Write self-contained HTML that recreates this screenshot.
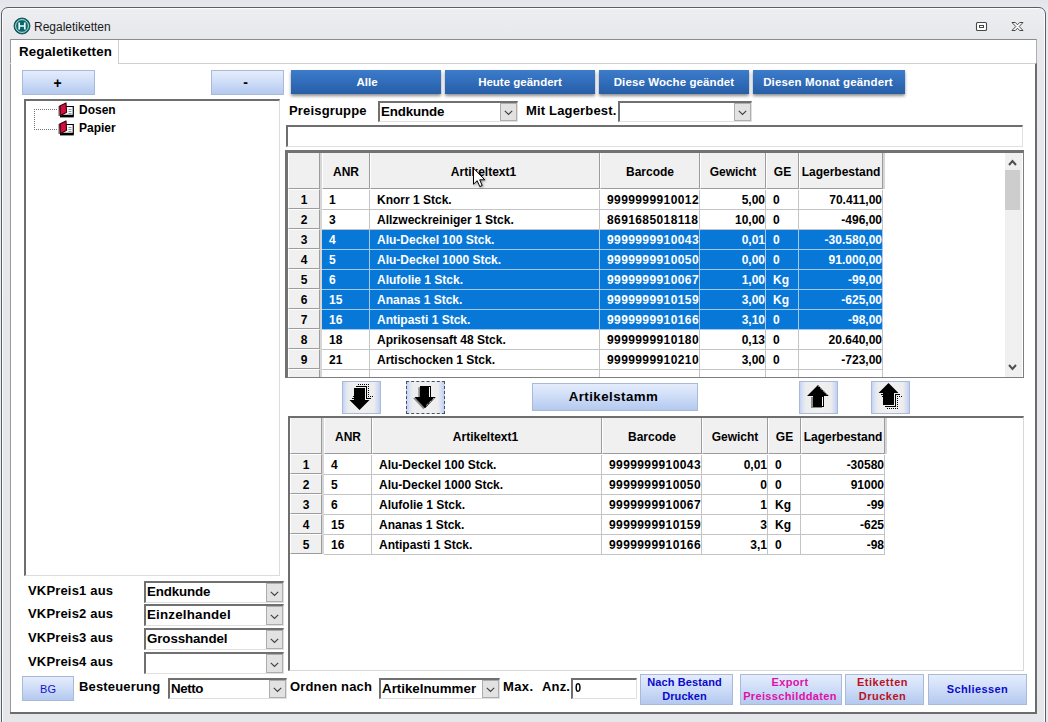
<!DOCTYPE html>
<html lang="de">
<head>
<meta charset="utf-8">
<title>Regaletiketten</title>
<style>
*{box-sizing:border-box;margin:0;padding:0}
html,body{width:1048px;height:722px;overflow:hidden}
body{background:linear-gradient(#e2e5eb,#e8eaef 12px,#e8eaef);font-family:"Liberation Sans",Arial,sans-serif;font-size:12px;color:#000;position:relative}
.abs{position:absolute}
#win{position:absolute;left:1px;top:7px;width:1045px;height:740px;border:1px solid #5a5e65;border-radius:7px;background:linear-gradient(#eceef1,#e6e8ec 30px,#e4e6ea);box-shadow:inset 0 0 0 1px rgba(255,255,255,.85)}
#ttl{position:absolute;left:34px;top:20px;font-size:12px;line-height:14px;color:#1c1c1c;letter-spacing:0}
#client{position:absolute;left:10px;top:39px;width:1027px;height:675px;background:#fff;border-left:1px solid #9a9a9a;border-top:1px solid #8c8c8c;border-right:1px solid #b0b0b0}
#panelb{position:absolute;left:10px;top:63px;width:1027px;height:651px;border-right:2px solid #6c6c6c;border-bottom:2px solid #6c6c6c;border-top:1px solid #d0d0d0}
#tab{position:absolute;left:11px;top:40px;width:108px;height:24px;background:#fff;border-right:1px solid #d0d0d0;font-weight:bold;font-size:13.3px;line-height:16px;padding:4px 0 0 8px;letter-spacing:.15px}
.lb{position:absolute;background:linear-gradient(#e5edfc,#cddcf7 50%,#b4c9ef);border:1px solid #a9b9d8;text-align:center;font-weight:bold}
.bb{position:absolute;top:70px;height:24px;background:linear-gradient(#3d7ccb,#2f6bb9 55%,#285ea6);color:#fff;font-weight:bold;font-size:11.5px;line-height:24px;text-align:center;box-shadow:0 2px 3px rgba(0,0,0,.45)}
.lab{position:absolute;font-weight:bold;font-size:13px;line-height:16px;white-space:pre;letter-spacing:.17px}
#tree{position:absolute;left:24px;top:99px;width:256px;height:477px;background:#fff;border-top:2px solid #6e6e6e;border-left:2px solid #6e6e6e;border-right:1px solid #dcdcdc;border-bottom:1px solid #dcdcdc}
.ti{position:absolute;left:79px;font-weight:bold;font-size:12px;line-height:14px}
.edit{position:absolute;background:#fff;border-top:2px solid #6e6e6e;border-left:2px solid #6e6e6e;border-right:1px solid #e0e0e0;border-bottom:1px solid #e0e0e0}
.combo{position:absolute;background:#fff;border-top:2px solid #707070;border-left:2px solid #707070;border-right:1px solid #e0e0e0;border-bottom:1px solid #e0e0e0}
.combo span{position:absolute;left:1px;top:1px;font-weight:bold;font-size:13.33px;line-height:16px;white-space:nowrap}
.combo i{position:absolute;right:0;top:0;bottom:0;width:17px;background:#e2e2e2;border:1px solid #adadad}
.combo i svg{position:absolute;left:3px;top:50%;margin-top:-2px}
.grid{position:absolute;background:#fff;border-top:2px solid #6e6e6e;border-left:2px solid #6e6e6e;border-right:1px solid #d8d8d8;border-bottom:1px solid #d8d8d8;overflow:hidden}
.ginner{position:absolute;left:0;top:0;right:0;bottom:0}
.hc{position:absolute;top:0;height:37px;background:#f0f0f0;border-right:1px solid #9c9c9c;border-bottom:1px solid #9c9c9c;border-top:1px solid #fff;border-left:1px solid #fff;font-weight:bold;font-size:12px;line-height:38px;text-align:center;white-space:nowrap;box-shadow:2px 0 0 #d6d6d6}
.row{position:absolute;left:0;height:20px;width:100%}
.rh{position:absolute;top:-1px;height:20px;background:#f0f0f0;border-right:1px solid #9c9c9c;border-bottom:1px solid #9c9c9c;border-top:1px solid #fff;border-left:1px solid #fff;font-weight:bold;font-size:12px;line-height:21px;text-align:center;box-shadow:2px 0 0 #d6d6d6}
.c{position:absolute;top:0;height:20px;border-right:1px solid #c4c4c4;border-bottom:1px solid #c4c4c4;font-weight:bold;font-size:12px;line-height:20px;white-space:nowrap;overflow:hidden}
.c.bc{letter-spacing:.4px}
.c.ge{padding-left:8px}
.c.l{padding-left:7px}
.c.r{text-align:right;padding-right:0}
.sel .c{background:#0878d8;color:#fff;border-color:#a4caf0}
.sb{position:absolute;right:1px;top:0;bottom:0;width:17px;background:#f0f0f0}
.sb .up{position:absolute;left:2px;top:7px}
.sb .dn{position:absolute;left:2px;bottom:6px}
.sb .thumb{position:absolute;left:0;width:15px;top:18px;height:40px;background:#cdcdcd}
.ab{position:absolute;top:381px;width:39px;height:33px;background:linear-gradient(90deg,#c6d3f1 0,#dde4f5 3px,#ededee 6px,#f0f0f0 50%,#ededee 31px,#d6dff4 34px,#c2d0ef 100%);border:1px solid #a9b9d9}

.gtop{left:285px;top:150px;width:739px;height:228px;border-left:3px solid #727272;border-top:3px solid #727272;border-right:1px solid #7e7e7e;border-bottom:1px solid #7e7e7e}
.gtop .ginner{top:-1px}
.gbot{left:288px;top:416px;width:736px;height:255px}
.gbot .ginner{top:-1px}
</style>
</head>
<body>
<div id="win"></div>
<svg class="abs" style="left:13px;top:17px" width="18" height="18" viewBox="0 0 18 18"><circle cx="9" cy="9" r="8" fill="#0b6568" stroke="#064a4c" stroke-width="0.8"/><circle cx="9" cy="9" r="6.4" fill="none" stroke="#d8f0f0" stroke-width="0.9"/><path d="M6.2 5.4v7.2M11.8 5.4v7.2M6.2 9h5.6" stroke="#e8ffff" stroke-width="1.7" fill="none"/></svg>
<div id="ttl">Regaletiketten</div>
<svg class="abs" style="left:975px;top:21px" width="13" height="11" viewBox="0 0 13 11"><rect x="1.5" y="1.5" width="10" height="8" rx="1" fill="#fff" stroke="#484848" stroke-width="1.1"/><rect x="4.5" y="4.5" width="4" height="2" fill="#fff" stroke="#484848" stroke-width="1"/></svg>
<svg class="abs" style="left:1011px;top:21px" width="13" height="11" viewBox="0 0 13 11"><path d="M1 1.5H4.3L6.5 3.8L8.7 1.5H12L8.2 5.5L12 9.5H8.7L6.5 7.2L4.3 9.5H1L4.8 5.5Z" fill="#fff" stroke="#484848" stroke-width="1" stroke-linejoin="round"/></svg>
<div id="client"></div>
<div id="panelb"></div>
<div id="tab">Regaletiketten</div>

<div class="lb" style="left:22px;top:70px;width:73px;height:25px;font-size:14px;line-height:25px;padding-right:2px">+</div>
<div class="lb" style="left:211px;top:70px;width:73px;height:25px;font-size:14px;line-height:23px;padding-right:4px">-</div>
<div class="bb" style="left:291px;width:150px;padding-left:2px">Alle</div>
<div class="bb" style="left:445px;width:150px">Heute geändert</div>
<div class="bb" style="left:599px;width:150px;letter-spacing:.1px">Diese Woche geändet</div>
<div class="bb" style="left:753px;width:152px;letter-spacing:.15px;padding-right:2px">Diesen Monat geändert</div>

<div id="tree">
<div class="abs" style="left:8px;top:8px;width:1px;height:21px;background:repeating-linear-gradient(#777 0 1px,transparent 1px 2px)"></div>
<div class="abs" style="left:8px;top:8px;width:24px;height:1px;background:repeating-linear-gradient(90deg,#777 0 1px,transparent 1px 2px)"></div>
<div class="abs" style="left:8px;top:28px;width:24px;height:1px;background:repeating-linear-gradient(90deg,#777 0 1px,transparent 1px 2px)"></div>
</div>
<svg class="abs" style="left:58px;top:102px" width="17" height="16" viewBox="0 0 17 16"><path d="M7.5 4.5H15.3V13.4H3.5" fill="#fff" stroke="#000" stroke-width="1.2"/><path d="M10.5 7.5h3M10.5 9.5h3M10.5 11.5h3" stroke="#8a9a9a" stroke-width="1"/><path d="M1.8 4L8 .9L8.6 10.2L2.3 13.8Z" fill="#d01040" stroke="#3a0008" stroke-width="1.1" stroke-linejoin="round"/><path d="M2 14.6H15.8" stroke="#000" stroke-width="1.6"/><path d="M.3 5h2.2M.3 7h2.2M.3 9h2.2M.3 11h2.2M.3 13h2.2" stroke="#200" stroke-width=".9"/></svg>
<svg class="abs" style="left:58px;top:120px" width="17" height="16" viewBox="0 0 17 16"><path d="M7.5 4.5H15.3V13.4H3.5" fill="#fff" stroke="#000" stroke-width="1.2"/><path d="M10.5 7.5h3M10.5 9.5h3M10.5 11.5h3" stroke="#8a9a9a" stroke-width="1"/><path d="M1.8 4L8 .9L8.6 10.2L2.3 13.8Z" fill="#d01040" stroke="#3a0008" stroke-width="1.1" stroke-linejoin="round"/><path d="M2 14.6H15.8" stroke="#000" stroke-width="1.6"/><path d="M.3 5h2.2M.3 7h2.2M.3 9h2.2M.3 11h2.2M.3 13h2.2" stroke="#200" stroke-width=".9"/></svg>
<div class="ti" style="top:103px">Dosen</div>
<div class="ti" style="top:121px">Papier</div>

<div class="lab" style="left:289px;top:103px">Preisgruppe</div>
<div class="lab" style="left:526px;top:103px">Mit Lagerbest.</div>
<div class="edit" style="left:286px;top:125px;width:737px;height:22px"></div>

<div class="grid gtop">
<div class="ginner">
<div class="hc" style="left:0px;width:32px"></div>
<div class="hc" style="left:34px;width:48px">ANR</div>
<div class="hc" style="left:82px;width:230px;padding-right:3px">Artikeltext1</div>
<div class="hc" style="left:312px;width:100px">Barcode</div>
<div class="hc" style="left:412px;width:66px">Gewicht</div>
<div class="hc" style="left:478px;width:33px">GE</div>
<div class="hc" style="left:511px;width:84px">Lagerbestand</div>
<div class="row" style="top:38px">
<div class="rh" style="left:0px;width:32px">1</div>
<div class="c l" style="left:34px;width:48px">1</div>
<div class="c l" style="left:82px;width:230px">Knorr 1 Stck.</div>
<div class="c l bc" style="left:312px;width:100px">9999999910012</div>
<div class="c r" style="left:412px;width:66px">5,00</div>
<div class="c l ge" style="left:478px;width:33px">0</div>
<div class="c r" style="left:511px;width:84px">70.411,00</div>
</div>
<div class="row" style="top:58px">
<div class="rh" style="left:0px;width:32px">2</div>
<div class="c l" style="left:34px;width:48px">3</div>
<div class="c l" style="left:82px;width:230px">Allzweckreiniger 1 Stck.</div>
<div class="c l bc" style="left:312px;width:100px">8691685018118</div>
<div class="c r" style="left:412px;width:66px">10,00</div>
<div class="c l ge" style="left:478px;width:33px">0</div>
<div class="c r" style="left:511px;width:84px">-496,00</div>
</div>
<div class="row sel" style="top:78px">
<div class="rh" style="left:0px;width:32px">3</div>
<div class="c l" style="left:34px;width:48px">4</div>
<div class="c l" style="left:82px;width:230px">Alu-Deckel 100 Stck.</div>
<div class="c l bc" style="left:312px;width:100px">9999999910043</div>
<div class="c r" style="left:412px;width:66px">0,01</div>
<div class="c l ge" style="left:478px;width:33px">0</div>
<div class="c r" style="left:511px;width:84px">-30.580,00</div>
</div>
<div class="row sel" style="top:98px">
<div class="rh" style="left:0px;width:32px">4</div>
<div class="c l" style="left:34px;width:48px">5</div>
<div class="c l" style="left:82px;width:230px">Alu-Deckel 1000 Stck.</div>
<div class="c l bc" style="left:312px;width:100px">9999999910050</div>
<div class="c r" style="left:412px;width:66px">0,00</div>
<div class="c l ge" style="left:478px;width:33px">0</div>
<div class="c r" style="left:511px;width:84px">91.000,00</div>
</div>
<div class="row sel" style="top:118px">
<div class="rh" style="left:0px;width:32px">5</div>
<div class="c l" style="left:34px;width:48px">6</div>
<div class="c l" style="left:82px;width:230px">Alufolie 1 Stck.</div>
<div class="c l bc" style="left:312px;width:100px">9999999910067</div>
<div class="c r" style="left:412px;width:66px">1,00</div>
<div class="c l ge" style="left:478px;width:33px">Kg</div>
<div class="c r" style="left:511px;width:84px">-99,00</div>
</div>
<div class="row sel" style="top:138px">
<div class="rh" style="left:0px;width:32px">6</div>
<div class="c l" style="left:34px;width:48px">15</div>
<div class="c l" style="left:82px;width:230px">Ananas 1 Stck.</div>
<div class="c l bc" style="left:312px;width:100px">9999999910159</div>
<div class="c r" style="left:412px;width:66px">3,00</div>
<div class="c l ge" style="left:478px;width:33px">Kg</div>
<div class="c r" style="left:511px;width:84px">-625,00</div>
</div>
<div class="row sel" style="top:158px">
<div class="rh" style="left:0px;width:32px">7</div>
<div class="c l" style="left:34px;width:48px">16</div>
<div class="c l" style="left:82px;width:230px">Antipasti 1 Stck.</div>
<div class="c l bc" style="left:312px;width:100px">9999999910166</div>
<div class="c r" style="left:412px;width:66px">3,10</div>
<div class="c l ge" style="left:478px;width:33px">0</div>
<div class="c r" style="left:511px;width:84px">-98,00</div>
</div>
<div class="row" style="top:178px">
<div class="rh" style="left:0px;width:32px">8</div>
<div class="c l" style="left:34px;width:48px">18</div>
<div class="c l" style="left:82px;width:230px">Aprikosensaft 48 Stck.</div>
<div class="c l bc" style="left:312px;width:100px">9999999910180</div>
<div class="c r" style="left:412px;width:66px">0,13</div>
<div class="c l ge" style="left:478px;width:33px">0</div>
<div class="c r" style="left:511px;width:84px">20.640,00</div>
</div>
<div class="row" style="top:198px">
<div class="rh" style="left:0px;width:32px">9</div>
<div class="c l" style="left:34px;width:48px">21</div>
<div class="c l" style="left:82px;width:230px">Artischocken 1 Stck.</div>
<div class="c l bc" style="left:312px;width:100px">9999999910210</div>
<div class="c r" style="left:412px;width:66px">3,00</div>
<div class="c l ge" style="left:478px;width:33px">0</div>
<div class="c r" style="left:511px;width:84px">-723,00</div>
</div>
<div class="row" style="top:218px">
<div class="rh" style="left:0px;width:32px"></div>
<div class="c l" style="left:34px;width:48px"></div>
<div class="c l" style="left:82px;width:230px"></div>
<div class="c l bc" style="left:312px;width:100px"></div>
<div class="c r" style="left:412px;width:66px"></div>
<div class="c l ge" style="left:478px;width:33px"></div>
<div class="c r" style="left:511px;width:84px"></div>
</div>
<div class="sb"><svg class="up" width="11" height="7" viewBox="0 0 11 7"><path d="M2 6 L5.5 2 L9 6" fill="none" stroke="#505050" stroke-width="2"/></svg><div class="thumb"></div><svg class="dn" width="11" height="7" viewBox="0 0 11 7"><path d="M2 1 L5.5 5 L9 1" fill="none" stroke="#505050" stroke-width="2"/></svg></div>

</div></div>
<div class="grid gbot">
<div class="ginner">
<div class="hc" style="left:0px;width:32px"></div>
<div class="hc" style="left:34px;width:48px">ANR</div>
<div class="hc" style="left:82px;width:230px;padding-right:3px">Artikeltext1</div>
<div class="hc" style="left:312px;width:100px">Barcode</div>
<div class="hc" style="left:412px;width:66px">Gewicht</div>
<div class="hc" style="left:478px;width:33px">GE</div>
<div class="hc" style="left:511px;width:84px">Lagerbestand</div>
<div class="row" style="top:38px">
<div class="rh" style="left:0px;width:32px">1</div>
<div class="c l" style="left:34px;width:48px">4</div>
<div class="c l" style="left:82px;width:230px">Alu-Deckel 100 Stck.</div>
<div class="c l bc" style="left:312px;width:100px">9999999910043</div>
<div class="c r" style="left:412px;width:66px">0,01</div>
<div class="c l ge" style="left:478px;width:33px">0</div>
<div class="c r" style="left:511px;width:84px">-30580</div>
</div>
<div class="row" style="top:58px">
<div class="rh" style="left:0px;width:32px">2</div>
<div class="c l" style="left:34px;width:48px">5</div>
<div class="c l" style="left:82px;width:230px">Alu-Deckel 1000 Stck.</div>
<div class="c l bc" style="left:312px;width:100px">9999999910050</div>
<div class="c r" style="left:412px;width:66px">0</div>
<div class="c l ge" style="left:478px;width:33px">0</div>
<div class="c r" style="left:511px;width:84px">91000</div>
</div>
<div class="row" style="top:78px">
<div class="rh" style="left:0px;width:32px">3</div>
<div class="c l" style="left:34px;width:48px">6</div>
<div class="c l" style="left:82px;width:230px">Alufolie 1 Stck.</div>
<div class="c l bc" style="left:312px;width:100px">9999999910067</div>
<div class="c r" style="left:412px;width:66px">1</div>
<div class="c l ge" style="left:478px;width:33px">Kg</div>
<div class="c r" style="left:511px;width:84px">-99</div>
</div>
<div class="row" style="top:98px">
<div class="rh" style="left:0px;width:32px">4</div>
<div class="c l" style="left:34px;width:48px">15</div>
<div class="c l" style="left:82px;width:230px">Ananas 1 Stck.</div>
<div class="c l bc" style="left:312px;width:100px">9999999910159</div>
<div class="c r" style="left:412px;width:66px">3</div>
<div class="c l ge" style="left:478px;width:33px">Kg</div>
<div class="c r" style="left:511px;width:84px">-625</div>
</div>
<div class="row" style="top:118px">
<div class="rh" style="left:0px;width:32px">5</div>
<div class="c l" style="left:34px;width:48px">16</div>
<div class="c l" style="left:82px;width:230px">Antipasti 1 Stck.</div>
<div class="c l bc" style="left:312px;width:100px">9999999910166</div>
<div class="c r" style="left:412px;width:66px">3,1</div>
<div class="c l ge" style="left:478px;width:33px">0</div>
<div class="c r" style="left:511px;width:84px">-98</div>
</div>

</div></div>

<div class="ab" style="left:342px"><svg width="37" height="31" viewBox="1 1 37 31" shape-rendering="crispEdges" style="position:absolute;left:0;top:0"><path d="M12 7H23V19H27.5L17.5 29L7.5 19H12Z" fill="#000" shape-rendering="geometricPrecision"/><path d="M10 17.5h2M11 15.5h1" stroke="#000" stroke-width="1"/><path d="M14 5.5H24.5V17.5H28.5" fill="none" stroke="#000" stroke-width="1"/><path d="M16 3.5H26.5V15.5H31" fill="none" stroke="#000" stroke-width="1" stroke-dasharray="1 1"/></svg></div>
<div class="ab" style="left:406px;border:1px dashed #46536e"><svg width="37" height="31" viewBox="1 1 37 31" shape-rendering="crispEdges" style="position:absolute;left:0;top:0"><path d="M12.3 6.2H23V17H28L17.3 28.2L7 17H12.3Z" fill="#8a8a8a" shape-rendering="geometricPrecision"/><path d="M14 5H25V16H29.8L19 27.2L8.5 16H14Z" fill="#000" shape-rendering="geometricPrecision"/><path d="M23.5 6V16" stroke="#fff" stroke-width="1"/><path d="M27.9 17.2L20.1 24.6" stroke="#fff" stroke-width="1" stroke-dasharray="1 1" shape-rendering="geometricPrecision"/></svg></div>
<div class="ab" style="left:799px"><svg width="37" height="31" viewBox="1 1 37 31" shape-rendering="crispEdges" style="position:absolute;left:0;top:0"><path d="M12 15.5H14V26H22.5V27H12Z" fill="#8a8a8a"/><path d="M14 26V15H8L19 4L29.8 15H25V26Z" fill="#000" shape-rendering="geometricPrecision"/><path d="M23.5 15.5V25" stroke="#fff" stroke-width="1"/><path d="M19.6 5.2L28.4 14" stroke="#fff" stroke-width="1" stroke-dasharray="1 1" shape-rendering="geometricPrecision"/></svg></div>
<div class="ab" style="left:871px"><svg width="37" height="31" viewBox="1 1 37 31" shape-rendering="crispEdges" style="position:absolute;left:0;top:0"><path d="M12 24V12H7.5L17.5 2L27.5 12H23V24Z" fill="#000" shape-rendering="geometricPrecision"/><path d="M10 13.5h2M11 15.5h1" stroke="#000" stroke-width="1"/><path d="M29 13.5H24.5V25.5H14" fill="none" stroke="#000" stroke-width="1"/><path d="M31 15.5H26.5V27.5H16" fill="none" stroke="#000" stroke-width="1" stroke-dasharray="1 1"/></svg></div>
<div class="lb" style="left:532px;top:383px;width:166px;height:28px;font-size:13.3px;line-height:26px;letter-spacing:.45px;padding-right:3px">Artikelstamm</div>

<div class="lab" style="left:28px;top:583px">VKPreis1 aus</div>
<div class="lab" style="left:28px;top:606px">VKPreis2 aus</div>
<div class="lab" style="left:28px;top:630px">VKPreis3 aus</div>
<div class="lab" style="left:28px;top:654px">VKPreis4 aus</div>
<div class="lb" style="left:22px;top:676px;width:52px;height:25px;font-size:11px;line-height:24px;font-weight:normal;color:#1414cc">BG</div>
<div class="lab" style="left:79px;top:679px">Besteuerung</div>
<div class="lab" style="left:290px;top:679px">Ordnen nach</div>
<div class="lab" style="left:503px;top:679px;letter-spacing:.4px">Max.</div><div class="lab" style="left:542px;top:679px">Anz.</div>
<div class="edit" style="left:571px;top:678px;width:66px;height:21px"><span style="position:absolute;left:2px;top:0;font-size:13px;font-weight:bold;line-height:16px;transform:scaleX(.85);transform-origin:0 0">0</span></div>
<div class="combo" style="left:378px;top:101px;width:140px;height:21px"><span style="letter-spacing:-0.15px">Endkunde</span><i><svg width="9" height="6" viewBox="0 0 9 6"><path d="M0.8 0.8 L4.5 4.5 L8.2 0.8" fill="none" stroke="#404040" stroke-width="1.15"/></svg></i></div>
<div class="combo" style="left:618px;top:101px;width:134px;height:21px"><span style="letter-spacing:0px"></span><i><svg width="9" height="6" viewBox="0 0 9 6"><path d="M0.8 0.8 L4.5 4.5 L8.2 0.8" fill="none" stroke="#404040" stroke-width="1.15"/></svg></i></div>
<div class="combo" style="left:144px;top:581px;width:140px;height:22px"><span style="letter-spacing:-0.15px">Endkunde</span><i><svg width="9" height="6" viewBox="0 0 9 6"><path d="M0.8 0.8 L4.5 4.5 L8.2 0.8" fill="none" stroke="#404040" stroke-width="1.15"/></svg></i></div>
<div class="combo" style="left:144px;top:604px;width:140px;height:22px"><span style="letter-spacing:0.2px">Einzelhandel</span><i><svg width="9" height="6" viewBox="0 0 9 6"><path d="M0.8 0.8 L4.5 4.5 L8.2 0.8" fill="none" stroke="#404040" stroke-width="1.15"/></svg></i></div>
<div class="combo" style="left:144px;top:628px;width:140px;height:22px"><span style="letter-spacing:-0.1px">Grosshandel</span><i><svg width="9" height="6" viewBox="0 0 9 6"><path d="M0.8 0.8 L4.5 4.5 L8.2 0.8" fill="none" stroke="#404040" stroke-width="1.15"/></svg></i></div>
<div class="combo" style="left:144px;top:652px;width:140px;height:22px"><span style="letter-spacing:0px"></span><i><svg width="9" height="6" viewBox="0 0 9 6"><path d="M0.8 0.8 L4.5 4.5 L8.2 0.8" fill="none" stroke="#404040" stroke-width="1.15"/></svg></i></div>
<div class="combo" style="left:168px;top:678px;width:119px;height:21px"><span style="letter-spacing:-0.4px">Netto</span><i><svg width="9" height="6" viewBox="0 0 9 6"><path d="M0.8 0.8 L4.5 4.5 L8.2 0.8" fill="none" stroke="#404040" stroke-width="1.15"/></svg></i></div>
<div class="combo" style="left:379px;top:678px;width:121px;height:21px"><span style="letter-spacing:0px">Artikelnummer</span><i><svg width="9" height="6" viewBox="0 0 9 6"><path d="M0.8 0.8 L4.5 4.5 L8.2 0.8" fill="none" stroke="#404040" stroke-width="1.15"/></svg></i></div>
<div class="lb bt" style="left:640px;top:674px;width:93px;height:31px;font-size:11px;line-height:14px;padding-top:0;padding-right:4px;letter-spacing:.1px;color:#0a0acd">Nach Bestand<br>Drucken</div>
<div class="lb bt" style="left:740px;top:674px;width:102px;height:31px;font-size:11px;line-height:14px;padding-top:0;padding-right:2px;letter-spacing:.35px;color:#e010a8">Export<br>Preisschilddaten</div>
<div class="lb bt" style="left:845px;top:674px;width:79px;height:31px;font-size:11px;line-height:14px;padding-top:0;padding-right:4px;letter-spacing:.5px;color:#b81424">Etiketten<br>Drucken</div>
<div class="lb bt" style="left:928px;top:674px;width:99px;height:31px;font-size:11px;line-height:29px;color:#0a0acd;letter-spacing:.4px">Schliessen</div>
<svg class="abs" style="left:472px;top:167px;filter:drop-shadow(1px 1px 1px rgba(0,0,0,.35))" width="16" height="22" viewBox="0 0 16 22"><path d="M1.5 1.2V17.2L5.2 13.7L7.8 19.6L10.2 18.5L7.7 12.8H12.8Z" fill="#fff" stroke="#000" stroke-width="1" stroke-linejoin="miter"/></svg>
</body>
</html>
